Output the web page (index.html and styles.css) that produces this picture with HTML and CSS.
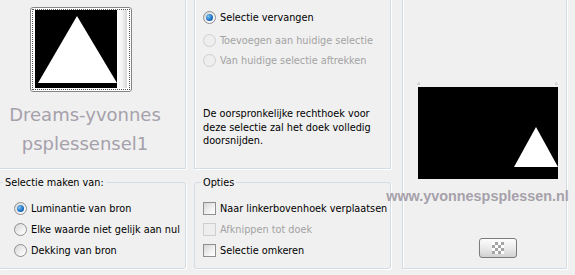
FILE: index.html
```html
<!DOCTYPE html>
<html lang="nl">
<head>
  <meta charset="UTF-8" />
  <title>Selectie uit masker</title>
  <link rel="stylesheet" href="styles.css">
</head>
<body>

  <div class="dialog">

    <div class="col col-left">
      <div class="panel panel-source">
        <div class="thumb">
          <div class="thumb-focus">
            <svg width="96" height="79" viewBox="0 0 96 79">
              <rect x="2" y="0" width="82" height="78" fill="#000" />
              <polygon points="44,6 5,73 84,73" fill="#fff" />
              <rect x="84" y="0" width="10" height="78" fill="url(#strip)" />
              <defs>
                <linearGradient id="strip" x1="0" y1="0" x2="1" y2="0">
                  <stop offset="0" stop-color="#ffffff" />
                  <stop offset="0.5" stop-color="#f4f4f4" />
                  <stop offset="1" stop-color="#d6d6d6" />
                </linearGradient>
              </defs>
            </svg>
          </div>
        </div>
        <p class="mark">Dreams-yvonnes<br>psplessensel1</p>
      </div>

      <fieldset class="group group-from">
        <legend>Selectie maken van:</legend>
        <label class="opt"><span class="radio on"></span>Luminantie van bron</label>
        <label class="opt"><span class="radio"></span>Elke waarde niet gelijk aan nul</label>
        <label class="opt"><span class="radio"></span>Dekking van bron</label>
      </fieldset>
    </div>

    <div class="col col-mid">
      <div class="panel panel-mode">
        <label class="opt opt-1"><span class="radio on"></span>Selectie vervangen</label>
        <label class="opt opt-2 off"><span class="radio"></span>Toevoegen aan huidige selectie</label>
        <label class="opt opt-3 off"><span class="radio"></span>Van huidige selectie aftrekken</label>
        <p class="note">De oorspronkelijke rechthoek voor deze selectie zal het doek volledig doorsnijden.</p>
      </div>

      <fieldset class="group group-opts">
        <legend>Opties</legend>
        <label class="opt"><span class="check"></span>Naar linkerbovenhoek verplaatsen</label>
        <label class="opt off"><span class="check"></span>Afknippen tot doek</label>
        <label class="opt"><span class="check"></span>Selectie omkeren</label>
      </fieldset>
    </div>

    <div class="panel panel-preview">
      <svg class="preview" width="144" height="97" viewBox="0 0 144 97">
        <path d="M0,2 h3 M2,0 v3 M138,2 h3 M139,0 v3" stroke="#c8c8c8" stroke-width="1" />
        <rect x="1" y="5" width="140" height="92" fill="#000" />
        <polygon points="119,45 97,85 141,85" fill="#fff" />
      </svg>
      <button class="btn-bg"><span class="checker"></span></button>
    </div>

    <div class="watermark">www.yvonnespsplessen.nl</div>
  </div>

</body>
</html>
```

FILE: styles.css
```css
body {
  margin: 0;
  width: 575px;
  height: 275px;
  overflow: hidden;
  background: #f0f0f0;
  font-family: "DejaVu Sans Condensed", "Liberation Sans", sans-serif;
  font-size: 10.8px;
  color: #000;
}

.dialog {
  position: relative;
  display: flex;
  align-items: flex-start;
  margin: -2px 0 0 -2px;
}

.col {
  display: flex;
  flex-direction: column;
}

.col-left {
  width: 188px;
}

.col-mid {
  width: 197px;
  margin-left: 8px;
}

.panel {
  box-sizing: border-box;
  border: 1px solid #d3dbe3;
  box-shadow: 1px 1px 0 #fff, inset 1px 1px 0 #fff;
}

.panel-source,
.panel-mode {
  height: 171px;
}

/* thumbnail */
.thumb {
  width: 100px;
  height: 83px;
  margin: 8px 0 0 31px;
  border: 1px solid #858585;
  border-radius: 3px;
  background: #fff;
}

.thumb-focus {
  margin: 1px;
  height: 79px;
  border: 1px dotted #555;
}

.thumb-focus svg {
  display: block;
}

.mark {
  margin: 8px 0 0;
  width: 172px;
  text-align: center;
  font-family: "DejaVu Sans", sans-serif;
  font-size: 18px;
  line-height: 29px;
  color: #a6a0ab;
}

/* radio + checkbox rows */
.opt {
  display: flex;
  align-items: center;
  height: 13px;
  line-height: 13px;
  white-space: nowrap;
}

.opt.off {
  color: #a3a3a3;
}

.radio,
.check {
  box-sizing: border-box;
  width: 13px;
  height: 13px;
  margin-right: 4px;
  flex: none;
  border: 1px solid #8e8f8f;
  background: linear-gradient(135deg, #d6d6d6, #f6f6f6 70%, #fff);
}

.radio {
  border-radius: 50%;
  display: flex;
  align-items: center;
  justify-content: center;
}

.radio.on::after {
  content: "";
  width: 7px;
  height: 7px;
  border-radius: 50%;
  background: radial-gradient(circle at 35% 35%, #7fc4f4, #1f74c4 55%, #0b4c92);
}

.off .radio,
.off .check {
  border-color: #cfcfcf;
  background: #eeeeee;
}

/* mode panel */
.panel-mode {
  padding: 12px 0 0 8px;
}

.panel-mode .opt-2 {
  margin-top: 10px;
}

.panel-mode .opt-3 {
  margin-top: 7px;
}

.note {
  margin: 40px 0 0 0;
  line-height: 13.5px;
  width: 175px;
}

/* group boxes */
.group {
  box-sizing: border-box;
  height: 93px;
  margin: 7px 0 0;
  padding: 0;
  border: 1px solid #d3dbe3;
  border-radius: 3px;
  box-shadow: 1px 1px 0 #fff;
}

.group legend {
  padding: 0 2px;
  line-height: 13px;
}

.group .opt {
  margin-top: 8px;
}

.group .opt:first-of-type {
  margin-top: 13px;
}

.group-from legend {
  margin-left: 4px;
}

.group-from .opt {
  margin-left: 15px;
}

.group-opts legend {
  margin-left: 6px;
}

.group-opts .opt {
  margin-left: 8px;
}

/* preview panel */
.panel-preview {
  width: 165px;
  height: 271px;
  margin-left: 11px;
  display: flex;
  flex-direction: column;
}

.preview {
  display: block;
  margin: 83px 0 0 14px;
}

.btn-bg {
  box-sizing: border-box;
  width: 38px;
  height: 20px;
  margin: 59px 0 0 76px;
  padding: 0;
  border: 1px solid #7b7b7b;
  border-radius: 3px;
  background: linear-gradient(#fdfdfd, #e6e6e6 60%, #d0d0d0);
  display: flex;
  align-items: center;
  justify-content: center;
}

.checker {
  width: 12px;
  height: 12px;
  background-color: #fff;
  background-image:
    linear-gradient(45deg, #a4a4a4 25%, transparent 25%, transparent 75%, #a4a4a4 75%),
    linear-gradient(45deg, #a4a4a4 25%, transparent 25%, transparent 75%, #a4a4a4 75%);
  background-size: 6px 6px;
  background-position: 0 0, 3px 3px;
}

/* watermark laid over the panels */
.watermark {
  position: absolute;
  left: 387px;
  top: 189px;
  width: 185px;
  text-align: center;
  font-family: "Liberation Sans", sans-serif;
  font-weight: bold;
  font-size: 14.4px;
  line-height: 18px;
  color: #a6a1aa;
  white-space: nowrap;
}
```
